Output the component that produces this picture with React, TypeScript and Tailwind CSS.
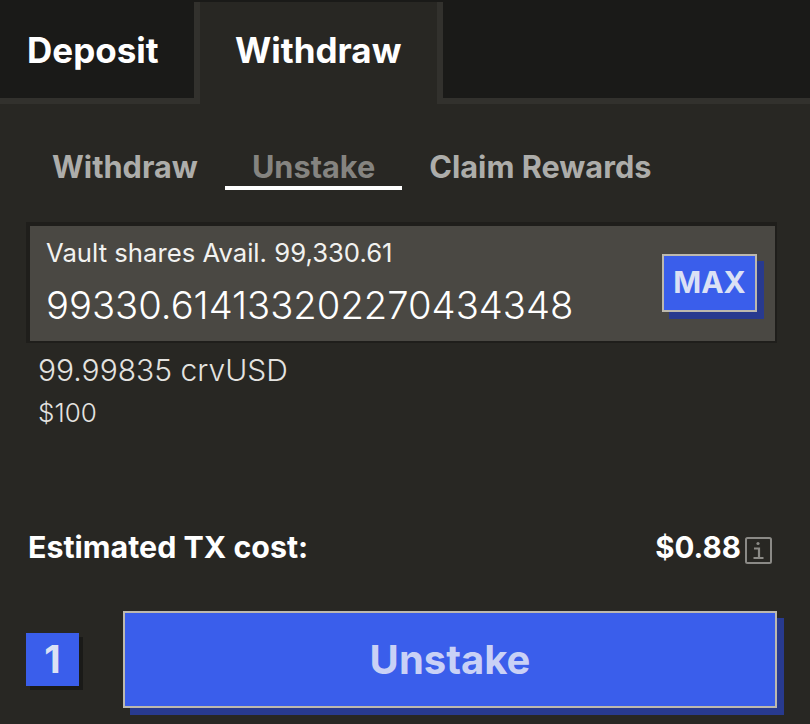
const font = "font-['Inter',sans-serif]"

const SubTab = ({ label, active }: { label: string; active?: boolean }) => {
  return (
    <div className={`px-[27px] h-[47px] flex items-center pt-[6px] border-b-[4px] ${active ? "border-white text-[#858480]" : "border-transparent text-[#adadaa]"}`}>
      <span className="text-[30.7px] font-bold leading-none">{label}</span>
    </div>
  )
}

const InfoIcon = () => {
  return (
    <svg width="27" height="27" viewBox="0 0 27 27" fill="none" className="ml-[4px] mt-[4px]">
      <rect x="1" y="1" width="25" height="25" rx="1.5" stroke="#8b8a86" strokeWidth="2" />
      <circle cx="13" cy="6.5" r="1.6" fill="#8b8a86" />
      <path d="M9 11.5H14V21M8.5 21H18.5" stroke="#8b8a86" strokeWidth="2.2" />
    </svg>
  )
}

export default function App() {
  return (
    <div className={`${font} w-[810px] h-[724px] overflow-hidden bg-[#282723] text-white flex flex-col`}>
      <div className="h-[2px] bg-[#1a1a18]" />
      <div className="flex h-[102px]">
        <div className="w-[200px] bg-[#1a1a18] border-r-[6px] border-b-[6px] border-[#32312d] pl-[27px] pt-[27px]">
          <span className="text-[35px] font-bold leading-[42px]">Deposit</span>
        </div>
        <div className="w-[237px] pl-[35px] pt-[27px]">
          <span className="text-[35px] font-bold leading-[42px]">Withdraw</span>
        </div>
        <div className="flex-1 bg-[#1a1a18] border-l-[6px] border-b-[6px] border-[#32312d]" />
      </div>

      <div className="flex pl-[25px] mt-[39px]">
        <SubTab label="Withdraw" />
        <SubTab label="Unstake" active />
        <SubTab label="Claim Rewards" />
      </div>

      <div className="ml-[26px] mt-[32px] w-[751px] h-[121px] bg-[#4a4843] border-t-[4px] border-l-[4px] border-r-[2px] border-b-[2px] border-[#1f1e1b] flex items-center justify-between pl-[16px] pr-[18px]">
        <div className="flex flex-col">
          <span className="text-[25.7px] leading-[30px] mt-[-3px] text-[#f2f2f0]">Vault shares Avail. 99,330.61</span>
          <span className="text-[38.2px] font-light leading-[44px] mt-[15px] text-white">99330.614133202270434348</span>
        </div>
        <div className="w-[95px] h-[58px] mt-[-2px] bg-[#3a5eeb] border-[2px] border-[#bdb9ae] shadow-[7px_7px_0_#283a8f] flex items-center justify-center text-[30px] font-bold text-[#dbe1f5]">
          MAX
        </div>
      </div>

      <div className="pl-[38px] mt-[7px] flex flex-col">
        <span className="text-[30px] font-light leading-[40px] text-[#e4e3e0]">99.99835 crvUSD</span>
        <span className="text-[26px] font-light leading-[30px] mt-[8px] text-[#e4e3e0]">$100</span>
      </div>

      <div className="flex items-center justify-between pl-[28px] pr-[38px] mt-[100px] h-[40px]">
        <span className="text-[30.4px] font-bold mt-[-1px]">Estimated TX cost:</span>
        <div className="flex items-center">
          <span className="text-[29.5px] font-bold mt-[-1px]">$0.88</span>
          <InfoIcon />
        </div>
      </div>

      <div className="flex items-center pl-[26px] mt-[43px]">
        <div className="w-[53px] h-[53px] bg-[#3a5eeb] shadow-[4px_4px_0_#1a1a18] flex items-center justify-center text-[38px] font-bold text-[#dbe1f5]">
          1
        </div>
        <div className="ml-[44px] w-[654px] h-[97px] bg-[#3a5eeb] border-[2px] border-[#bdb9ae] shadow-[7px_7px_0_#283a8f] flex items-center justify-center text-[40px] font-bold text-[#c9d1f6]">
          Unstake
        </div>
      </div>
    </div>
  )
}
